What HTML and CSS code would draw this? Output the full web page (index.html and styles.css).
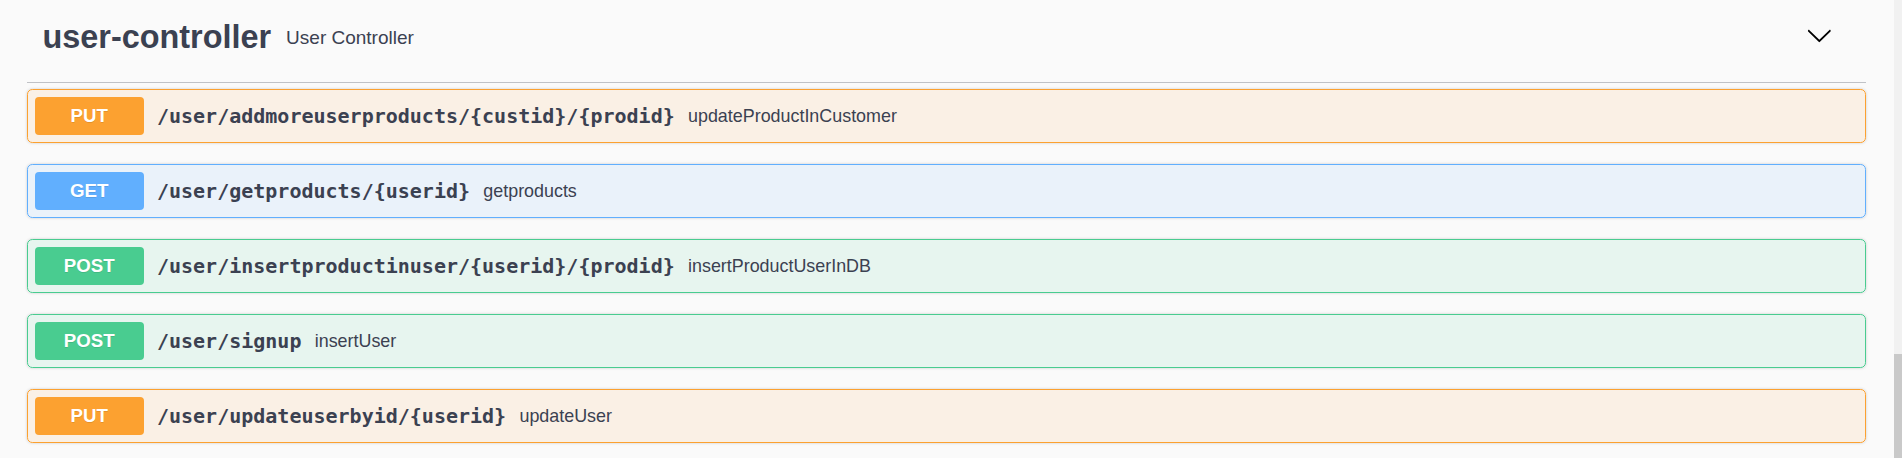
FILE: index.html
```html
<!DOCTYPE html>
<html lang="en">
<head>
<meta charset="utf-8">
<title>user-controller</title>
<link rel="stylesheet" href="styles.css">
</head>
<body>
<div class="page">
  <main class="main">
    <section class="tag-section">
      <h3 class="tag-header">
        <span class="tag-name">user-controller</span>
        <small class="tag-desc">User Controller</small>
        <button class="expand" aria-label="Collapse operation">
          <svg class="arrow" viewBox="0 0 20 20" width="26.67" height="26.67" aria-hidden="true">
            <path d="M17.418 6.109c.272-.268.709-.268.979 0s.271.701 0 .969l-7.908 7.83c-.27.268-.707.268-.979 0l-7.908-7.830c-.27-.268-.27-.701 0-.969.271-.268.709-.268.979 0L10 13.25l7.418-7.141z"/>
          </svg>
        </button>
      </h3>
      <div class="ops">
        <div class="op op-put">
          <span class="method">PUT</span>
          <span class="path">/user/addmoreuserproducts/{custid}/{prodid}</span>
          <span class="desc">updateProductInCustomer</span>
        </div>
        <div class="op op-get">
          <span class="method">GET</span>
          <span class="path">/user/getproducts/{userid}</span>
          <span class="desc">getproducts</span>
        </div>
        <div class="op op-post">
          <span class="method">POST</span>
          <span class="path">/user/insertproductinuser/{userid}/{prodid}</span>
          <span class="desc">insertProductUserInDB</span>
        </div>
        <div class="op op-post">
          <span class="method">POST</span>
          <span class="path">/user/signup</span>
          <span class="desc">insertUser</span>
        </div>
        <div class="op op-put">
          <span class="method">PUT</span>
          <span class="path">/user/updateuserbyid/{userid}</span>
          <span class="desc">updateUser</span>
        </div>
      </div>
    </section>
  </main>
  <div class="scrollbar"><div class="thumb"></div></div>
</div>
</body>
</html>
```

FILE: styles.css
```css
* { box-sizing: border-box; }

html, body {
  margin: 0;
  padding: 0;
  height: 100%;
  overflow: hidden;
  background: #fafafa;
  font-family: "Liberation Sans", Arial, sans-serif;
  color: #3b4151;
}

.page {
  display: flex;
  height: 458px;
}

.main {
  flex: 1;
  padding: 0 28px 0 27px;
}

.scrollbar {
  width: 8px;
  background: #f1f1f1;
  display: flex;
  flex-direction: column;
}

.thumb {
  margin-top: auto;
  height: 104px;
  background: #c9c9c9;
}

.tag-header {
  display: flex;
  align-items: center;
  margin: 0 0 6px;
  padding: 19px 33.5px 26px 15.5px;
  border-bottom: 1px solid rgba(59, 65, 81, 0.3);
  font-weight: 700;
}

.tag-name {
  font-size: 32.4px;
  line-height: 37px;
  font-weight: 700;
  color: #3b4151;
}

.tag-desc {
  flex: 1;
  font-size: 19px;
  font-weight: 400;
  padding: 0 15px;
  color: #3b4151;
}

.expand {
  border: none;
  background: none;
  padding: 0;
  margin: 0 0 4px;
  display: flex;
  cursor: pointer;
}

.arrow {
  fill: #000;
  display: block;
}

.ops {
  display: flex;
  flex-direction: column;
  gap: 21px;
}

.op {
  display: flex;
  align-items: center;
  height: 54px;
  padding: 0 6.67px;
  border: 1px solid;
  border-radius: 5.3px;
  box-shadow: 0 0 3px rgba(0, 0, 0, 0.19);
}

.op-put { background: rgba(252, 161, 48, 0.1); border-color: #fca130; }
.op-get { background: rgba(97, 175, 254, 0.1); border-color: #61affe; }
.op-post { background: rgba(73, 204, 144, 0.1); border-color: #49cc90; }

.method {
  min-width: 109px;
  height: 38.7px;
  padding: 0 20px;
  display: flex;
  align-items: center;
  justify-content: center;
  border-radius: 4px;
  font-size: 18.67px;
  font-weight: 700;
  color: #fff;
  text-shadow: 0 1px 0 rgba(0, 0, 0, 0.1);
}

.op-put .method { background: #fca130; }
.op-get .method { background: #61affe; }
.op-post .method { background: #49cc90; }

.path {
  padding: 0 13.3px;
  font-family: "DejaVu Sans Mono", monospace;
  font-weight: 700;
  font-size: 20px;
  color: #3b4151;
}

.desc {
  font-size: 17.9px;
  color: #3b4151;
}
```
